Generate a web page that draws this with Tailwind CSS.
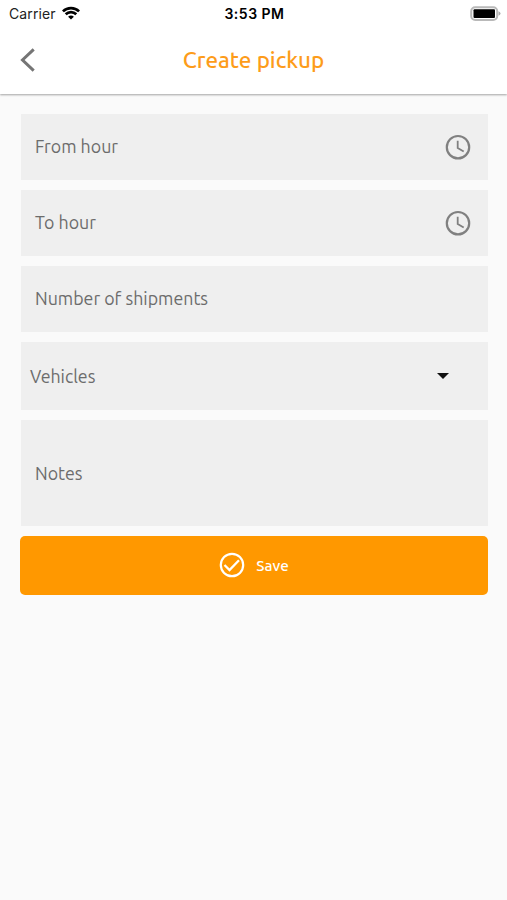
<!DOCTYPE html>
<html lang="en">
<head>
<meta charset="utf-8">
<title>Create pickup</title>
<script src="https://cdn.jsdelivr.net/npm/@tailwindcss/browser@4"></script>
</head>
<body class="bg-[#fafafa] font-['Ubuntu','Noto_Sans',sans-serif]">
<div class="w-[507px] h-[900px] flex flex-col overflow-hidden">
  <header class="h-[94px] shrink-0 bg-white shadow-[0_0.5px_2px_rgba(0,0,0,0.35)]">
    <div class="h-7 grid grid-cols-3 items-center pl-[8px] pr-[6px] font-['Inter',sans-serif] text-black">
      <div class="flex items-center gap-[6px] pl-px">
        <span class="text-[14px] leading-7 tracking-[0.1px] text-[#222]">Carrier</span>
        <svg class="w-[18px] h-[14px] -mt-[2px]" viewBox="0 0 18 14" fill="none" stroke="#000" stroke-width="2.7"><path d="M.9 5.400C5.400.9 12.600.9 17.100 5.400M3.700 8.300C6.700 5.400 11.300 5.400 14.300 8.300"/><path d="M9 13.500 6.100 10.700C7.800 9.200 10.200 9.200 11.900 10.700Z" fill="#000" stroke="none"/></svg>
      </div>
      <span class="text-center text-[14px] leading-7 font-semibold tracking-[0.5px] whitespace-nowrap">3:53 PM</span>
      <svg class="w-[31px] h-[15px] justify-self-end -mt-[2px]" viewBox="0 0 31 15"><rect x="1.200" y="1.200" width="26" height="12.800" rx="4" fill="#fff" stroke="#b9b9b9" stroke-width="2"/><rect x="3.500" y="3.200" width="21.500" height="8.800" rx="1" fill="#000"/><path d="M28.500 5.200v4.600q2-.8 2-2.300t-2-2.300" fill="#aaa"/></svg>
    </div>
    <div class="h-[63px] grid grid-cols-[1fr_auto_1fr] items-center">
      <svg class="w-[16px] h-[24px] ml-[20px]" viewBox="0 0 16 24" fill="none" stroke="#757575" stroke-width="3"><path d="M13.700 1.300 2.500 12l11.200 10.700"/></svg>
      <h1 class="text-[22.400px] leading-7 font-medium text-[#fd9c1a]">Create pickup</h1>
    </div>
  </header>
  <main class="pt-5 pl-[21px] pr-[19px] flex flex-col gap-[10px] text-[17.800px] text-[#6c6c6c]">
    <div class="h-[66px] bg-[#efefef] pl-[14px] pr-[17px] pb-px flex items-center justify-between">
      <span>From hour</span>
      <svg class="w-[26px] h-[26px]" viewBox="0 0 26 26" fill="none" stroke="#808080"><circle cx="13" cy="13.200" r="11.200" stroke-width="2.200"/><path d="M12.700 6.700v7.200l6 3.600" stroke-width="1.800"/></svg>
    </div>
    <div class="h-[66px] bg-[#efefef] pl-[14px] pr-[17px] pb-px flex items-center justify-between">
      <span>To hour</span>
      <svg class="w-[26px] h-[26px]" viewBox="0 0 26 26" fill="none" stroke="#808080"><circle cx="13" cy="13.200" r="11.200" stroke-width="2.200"/><path d="M12.700 6.700v7.200l6 3.600" stroke-width="1.800"/></svg>
    </div>
    <div class="h-[66.400px] bg-[#efefef] pl-[14px] pb-px flex items-center"><span>Number of shipments</span></div>
    <div class="h-[68px] bg-[#efefef] pl-[9px] pr-[39px] flex items-center justify-between">
      <span>Vehicles</span>
      <svg class="w-[12px] h-[6px]" viewBox="0 0 12 6"><path d="M0 0h12L6 6z" fill="#111"/></svg>
    </div>
    <div class="h-[105.200px] bg-[#efefef] pl-[14px] flex items-center"><span>Notes</span></div>
    <button class="h-[59px] -ml-px rounded-[5px] bg-[#ff9800] flex items-center justify-center gap-[11px] text-[15.200px] font-medium text-white">
      <svg class="w-[26px] h-[26px]" viewBox="0 0 26 26" fill="none" stroke="#fff"><circle cx="13" cy="13" r="11.200" stroke-width="2.200"/><path d="M5.500 13l5 5 9.500-9.800" stroke-width="2.300"/></svg>
      <span class="pt-[2px]">Save</span>
    </button>
  </main>
</div>
</body>
</html>
